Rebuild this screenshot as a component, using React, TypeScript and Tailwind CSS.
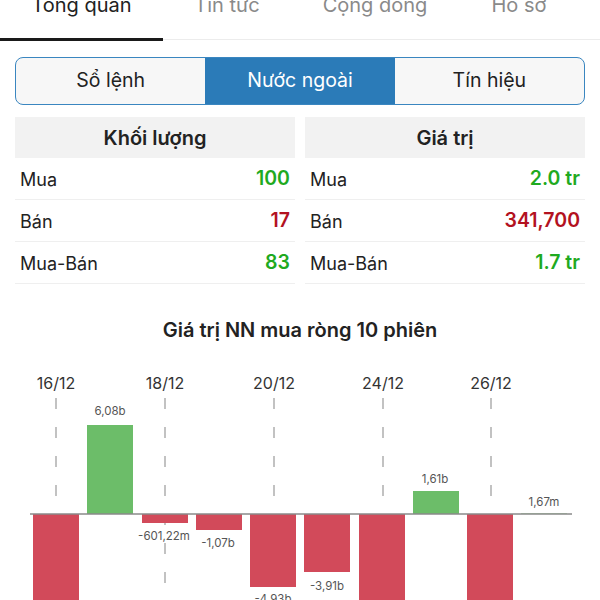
import React from "react";

const TOP_TABS = [
  { label: "Tổng quan", w: "w-[163px]", active: true },
  { label: "Tin tức", w: "w-[128px]", active: false },
  { label: "Cộng đồng", w: "w-[168px]", active: false },
  { label: "Hồ sơ", w: "w-[120px]", active: false },
];

const SEGMENTS = ["Sổ lệnh", "Nước ngoài", "Tín hiệu"];

type Row = { label: string; value: string; up: boolean };

const VOLUME: Row[] = [
  { label: "Mua", value: "100", up: true },
  { label: "Bán", value: "17", up: false },
  { label: "Mua-Bán", value: "83", up: true },
];

const VALUE: Row[] = [
  { label: "Mua", value: "2.0 tr", up: true },
  { label: "Bán", value: "341,700", up: false },
  { label: "Mua-Bán", value: "1.7 tr", up: true },
];

// bars: x, height (positive = above zero line at y=153)
const ZERO = 153;
const BARS = [
  { x: 33, h: -120, label: "", lx: 56, ly: 0 },
  { x: 87, h: 89, label: "6,08b", lx: 110, ly: 54 },
  { x: 142, h: -9, label: "-601,22m", lx: 164, ly: 179 },
  { x: 196, h: -16, label: "-1,07b", lx: 218, ly: 186 },
  { x: 250, h: -73, label: "-4,93b", lx: 273, ly: 242 },
  { x: 304, h: -58, label: "-3,91b", lx: 327, ly: 229 },
  { x: 359, h: -120, label: "", lx: 381, ly: 0 },
  { x: 413, h: 23, label: "1,61b", lx: 435, ly: 122 },
  { x: 467, h: -120, label: "", lx: 490, ly: 0 },
  { x: 521, h: 0.5, label: "1,67m", lx: 544, ly: 145 },
];

const DATES = [
  { x: 56, label: "16/12" },
  { x: 165, label: "18/12" },
  { x: 274, label: "20/12" },
  { x: 383, label: "24/12" },
  { x: 491, label: "26/12" },
];

function StatTable({ title, rows }: { title: string; rows: Row[] }) {
  return (
    <div className="flex-1">
      <div className="h-[41px] bg-[#f2f2f2] flex items-center justify-center text-[20px] font-semibold text-[#222]">
        {title}
      </div>
      {rows.map((r) => (
        <div
          key={r.label}
          className="h-[41px] mt-[1px] first:mt-[2px] flex items-center justify-between px-[5px] border-b border-[#efefef]"
        >
          <span className="text-[18px] text-[#222]">{r.label}</span>
          <span
            className={`text-[19.5px] font-semibold ${
              r.up ? "text-[#1faa1f]" : "text-[#b3121f]"
            }`}
          >
            {r.value}
          </span>
        </div>
      ))}
    </div>
  );
}

function NetChart() {
  return (
    <svg width="600" height="240" viewBox="0 0 600 240" className="block">
      {DATES.map((d) => (
        <g key={d.label}>
          <text
            x={d.x}
            y={28}
            textAnchor="middle"
            fontSize="16"
            fill="#333"
            fontFamily="Inter, sans-serif"
          >
            {d.label}
          </text>
          <line
            x1={d.x}
            x2={d.x}
            y1={37}
            y2={240}
            stroke="#9a9a9a"
            strokeWidth="1.2"
            strokeDasharray="11 18"
          />
        </g>
      ))}
      {BARS.map((b, i) => {
        const up = b.h > 0;
        const y = up ? ZERO - b.h : ZERO;
        return (
          <rect
            key={i}
            x={b.x}
            y={y}
            width={46}
            height={Math.abs(b.h)}
            fill={up ? "#6cbd69" : "#d24a5a"}
          />
        );
      })}
      <line x1={30} x2={572} y1={ZERO} y2={ZERO} stroke="#8a8a8a" strokeWidth="1.5" />
      {BARS.filter((b) => b.label).map((b) => (
        <text
          key={b.label}
          x={b.lx}
          y={b.ly}
          textAnchor="middle"
          fontSize="11.5"
          fill="#555"
          fontFamily="Inter, sans-serif"
        >
          {b.label}
        </text>
      ))}
    </svg>
  );
}

export default function App() {
  return (
    <div className="w-[600px] h-[600px] overflow-hidden bg-white font-['Inter',sans-serif]">
      {/* top tabs */}
      <div className="h-[40px] border-b border-[#ececec] flex items-start">
        {TOP_TABS.map((t) => (
          <div
            key={t.label}
            className={`${t.w} h-[40px] flex flex-col justify-between shrink-0`}
          >
            <div
              className={`-mt-[7px] leading-6 text-center text-[20px] ${
                t.active ? "text-[#222]" : "text-[#8a8a8a]"
              }`}
            >
              {t.label}
            </div>
            {t.active && <div className="h-[3px] bg-[#1a1a1a] mb-[-1px]" />}
          </div>
        ))}
      </div>

      {/* segmented control */}
      <div className="mx-[15px] mt-[17px] h-[48px] grid grid-cols-3 rounded-lg border-[1.5px] border-[#3a86c0] overflow-hidden bg-[#f7f7f7]">
        {SEGMENTS.map((s, i) => (
          <div
            key={s}
            className={`flex items-center justify-center text-[19.5px] ${
              i === 1 ? "bg-[#2b7bb8] text-white" : "text-[#222]"
            }`}
          >
            {s}
          </div>
        ))}
      </div>

      {/* tables */}
      <div className="mx-[15px] mt-[12px] flex gap-[10px]">
        <StatTable title="Khối lượng" rows={VOLUME} />
        <StatTable title="Giá trị" rows={VALUE} />
      </div>

      {/* chart */}
      <div className="mt-[34px] text-center text-[20px] font-semibold text-[#222] leading-6">
        Giá trị NN mua ròng 10 phiên
      </div>
      <div className="mt-[19px]">
        <NetChart />
      </div>
    </div>
  );
}
